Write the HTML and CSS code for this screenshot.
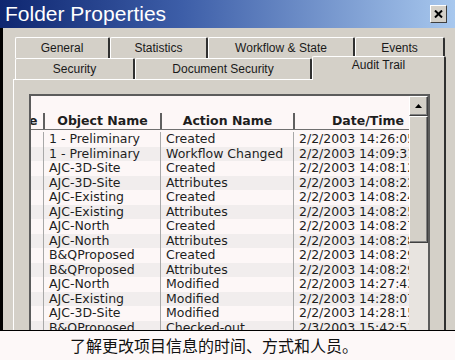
FILE: index.html
```html
<!DOCTYPE html>
<html lang="zh">
<head>
    <meta charset="UTF-8">
    <title>Folder Properties</title>
    <link rel="stylesheet" href="styles.css">
</head>
<body>
    <div class="titlebar">
        <span class="title">Folder Properties</span>
        <span class="close">
            <svg width="9" height="8" viewBox="0 0 9 8"><path d="M1 0.5 L8 7.5 M8 0.5 L1 7.5" stroke="#000" stroke-width="2"/></svg>
        </span>
    </div>
    <div class="dialog">
        <div class="tabrow">
            <div class="tab tab-general">General</div>
            <div class="tab tab-stats">Statistics</div>
            <div class="tab tab-workflow">Workflow &amp; State</div>
            <div class="tab tab-events">Events</div>
        </div>
        <div class="tabrow">
            <div class="tab tab-security">Security</div>
            <div class="tab tab-docsec">Document Security</div>
            <div class="tab tab-audit active">Audit Trail</div>
        </div>
        <div class="panel">
            <div class="list">
                <div class="list-main">
                    <div class="list-head">
                        <div class="hcell first"><span>e</span></div>
                        <div class="hcell">Object Name</div>
                        <div class="hcell">Action Name</div>
                        <div class="hcell">Date/Time</div>
                    </div>
                    <div class="list-body">
                        <div class="row"><div></div><div>1 - Preliminary</div><div>Created</div><div>2/2/2003 14:26:05</div></div>
                        <div class="row"><div></div><div>1 - Preliminary</div><div>Workflow Changed</div><div>2/2/2003 14:09:31</div></div>
                        <div class="row"><div></div><div>AJC-3D-Site</div><div>Created</div><div>2/2/2003 14:08:12</div></div>
                        <div class="row"><div></div><div>AJC-3D-Site</div><div>Attributes</div><div>2/2/2003 14:08:22</div></div>
                        <div class="row"><div></div><div>AJC-Existing</div><div>Created</div><div>2/2/2003 14:08:24</div></div>
                        <div class="row"><div></div><div>AJC-Existing</div><div>Attributes</div><div>2/2/2003 14:08:25</div></div>
                        <div class="row"><div></div><div>AJC-North</div><div>Created</div><div>2/2/2003 14:08:27</div></div>
                        <div class="row"><div></div><div>AJC-North</div><div>Attributes</div><div>2/2/2003 14:08:28</div></div>
                        <div class="row"><div></div><div>B&amp;QProposed</div><div>Created</div><div>2/2/2003 14:08:29</div></div>
                        <div class="row"><div></div><div>B&amp;QProposed</div><div>Attributes</div><div>2/2/2003 14:08:29</div></div>
                        <div class="row"><div></div><div>AJC-North</div><div>Modified</div><div>2/2/2003 14:27:43</div></div>
                        <div class="row"><div></div><div>AJC-Existing</div><div>Modified</div><div>2/2/2003 14:28:07</div></div>
                        <div class="row"><div></div><div>AJC-3D-Site</div><div>Modified</div><div>2/2/2003 14:28:15</div></div>
                        <div class="row"><div></div><div>B&amp;QProposed</div><div>Checked-out</div><div>2/3/2003 15:42:51</div></div>
                    </div>
                </div>
                <div class="scrollbar">
                    <div class="sb-btn">
                        <svg width="7" height="4" viewBox="0 0 7 4"><path d="M0 4 L3.5 0 L7 4 Z" fill="#000"/></svg>
                    </div>
                    <div class="sb-thumb"></div>
                </div>
            </div>
        </div>
    </div>
    <div class="caption">了解更改项目信息的时间、方式和人员。</div>
</body>
</html>
```
FILE: styles.css
```css
* {
    margin: 0;
    padding: 0;
    box-sizing: border-box;
}
body {
    width: 455px;
    height: 360px;
    overflow: hidden;
    background: #fdf8f8;
    font-family: "Liberation Sans", Arial, sans-serif;
}
.titlebar {
    height: 28px;
    display: flex;
    align-items: center;
    justify-content: space-between;
    background: linear-gradient(90deg, #0e2670 0%, #3d5ea8 40%, #a8c8ee 100%);
    padding: 0 8px 0 5px;
}
.title {
    color: #fff;
    font-size: 21px;
    line-height: 28px;
}
.close {
    width: 17px;
    height: 18px;
    display: flex;
    align-items: center;
    justify-content: center;
    background: #d4d0c8;
    border: 1px solid;
    border-color: #fff #404040 #404040 #fff;
}
.dialog {
    height: 303px;
    border-left: 3px solid #000;
    border-bottom: 1px solid #000;
    background: #d4d0c8;
    padding-top: 9px;
    display: flex;
    flex-direction: column;
    overflow: hidden;
}
.tabrow {
    display: flex;
    margin-left: 12px;
    flex-shrink: 0;
}
.tab {
    height: 21px;
    font-size: 12px;
    color: #1a1a1a;
    text-align: center;
    line-height: 20px;
    border-top: 1px solid #fff;
    border-left: 1px solid #fff;
    border-right: 2px solid #303030;
    border-radius: 2px 2px 0 0;
    background: #d4d0c8;
}
.tab-general { width: 95px; }
.tab-stats { width: 98px; }
.tab-workflow { width: 147px; }
.tab-events { width: 90px; }
.tab-security { width: 120px; }
.tab-docsec { width: 177px; }
.tab-audit { width: 134px; }
.tab.active {
    position: relative;
    z-index: 1;
    height: 24px;
    margin-top: -2px;
    margin-bottom: -1px;
    line-height: 17px;
}
.panel {
    flex: 1;
    min-height: 0;
    margin-left: 10px;
    width: 433px;
    border-top: 1px solid #fff;
    border-left: 1px solid #fff;
    border-right: 2px solid #303030;
    padding: 14px 0 0 15px;
    display: flex;
    flex-direction: column;
}
.list {
    flex: 1;
    width: 401px;
    border: 2px solid #5c5c5c;
    background: #fdf7f7;
    display: flex;
}
.list-main {
    width: 378px;
    overflow: hidden;
    padding-top: 17px;
    font-family: "DejaVu Sans", Verdana, sans-serif;
    font-size: 12.5px;
    color: #1e1e1e;
}
.list-head {
    display: grid;
    grid-template-columns: 12px 117px 133px 148px;
    height: 17px;
    border-bottom: 1px solid #707070;
}
.hcell {
    font-weight: bold;
    text-align: center;
    line-height: 16px;
    border-left: 2px solid #606060;
    white-space: nowrap;
}
.hcell.first {
    border-left: none;
    overflow: hidden;
    text-align: left;
    text-indent: -2px;
}
.list-body {
    padding-top: 2px;
}
.row {
    display: grid;
    grid-template-columns: 12px 117px 133px 148px;
    height: 14.5px;
    line-height: 14.5px;
}
.row:nth-child(even) {
    background: #f1eded;
}
.row div {
    border-left: 1px solid #a8a8a8;
    padding-left: 5px;
    white-space: nowrap;
    overflow: hidden;
}
.row div:first-child {
    border-left: none;
}
.scrollbar {
    width: 19px;
    background: #e8e4e0;
    display: flex;
    flex-direction: column;
}
.sb-btn,
.sb-thumb {
    background: #d4d0c8;
    border: 1px solid;
    border-color: #fff #404040 #404040 #fff;
    box-shadow: inset -1px -1px #808080;
}
.sb-btn {
    height: 20px;
    display: flex;
    align-items: center;
    justify-content: center;
}
.sb-thumb {
    height: 127px;
}
.caption {
    height: 29px;
    line-height: 29px;
    padding-left: 70px;
    font-family: "Noto Sans CJK SC", sans-serif;
    font-size: 16px;
    color: #111;
}
```
